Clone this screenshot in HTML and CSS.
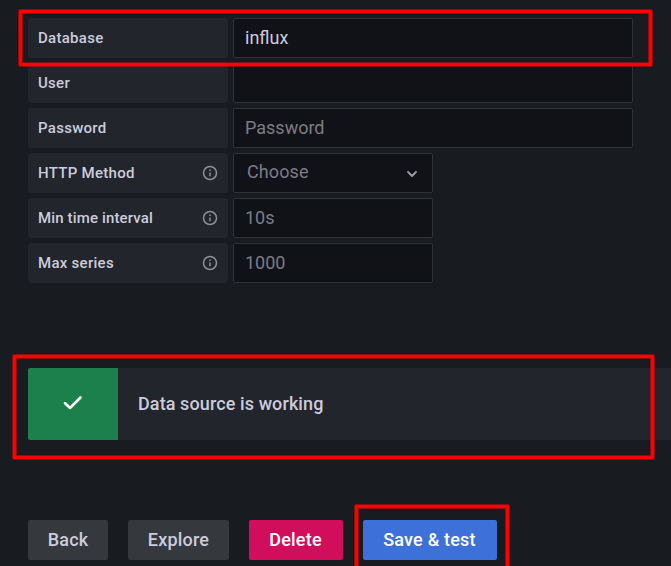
FILE: index.html
```html
<!DOCTYPE html>
<html lang="en">
<head>
<meta charset="utf-8">
<title>Data source settings</title>
<link rel="stylesheet" href="styles.css">
</head>
<body>
<main class="page">
  <form class="settings">
    <div class="row"><label class="label">Database</label><div class="field wide value">influx</div></div>
    <div class="row"><label class="label">User</label><div class="field wide"></div></div>
    <div class="row"><label class="label">Password</label><div class="field wide">Password</div></div>
    <div class="row"><label class="label"><span class="http">HTTP Method</span><svg class="info" viewBox="0 0 16 16"><circle cx="8" cy="8" r="6.5"/><path d="M8 7.4v3.8M8 4.6v1.4"/></svg></label><div class="field select"><span>Choose</span><svg class="chevron" viewBox="0 0 12 12"><path d="M2 4l4 4 4-4"/></svg></div></div>
    <div class="row"><label class="label"><span class="interval">Min time interval</span><svg class="info" viewBox="0 0 16 16"><circle cx="8" cy="8" r="6.5"/><path d="M8 7.4v3.8M8 4.6v1.4"/></svg></label><div class="field">10s</div></div>
    <div class="row"><label class="label rounded"><span class="series">Max series</span><svg class="info" viewBox="0 0 16 16"><circle cx="8" cy="8" r="6.5"/><path d="M8 7.4v3.8M8 4.6v1.4"/></svg></label><div class="field">1000</div></div>
  </form>
  <section class="alert">
    <div class="status"><svg class="check" viewBox="0 0 20 16"><path d="M2 8.2l5 4.8L17.5 2.5"/></svg></div>
    <div class="message">Data source is working</div>
  </section>
  <div class="actions">
    <button class="button back">Back</button>
    <button class="button explore">Explore</button>
    <button class="button delete">Delete</button>
    <button class="button save">Save &amp; test</button>
  </div>
  <div class="mark mark-database"></div>
  <div class="mark mark-alert"></div>
  <div class="mark mark-save"></div>
</main>
</body>
</html>
```
FILE: styles.css
```css
* { box-sizing: border-box; }
body { margin: 0; background: #181b1f; color: #ccccdc; font-family: Roboto, "Liberation Sans", sans-serif; }
.page { position: relative; height: 566px; padding: 18px 0 0 28px; overflow: hidden; }
.settings { display: flex; flex-direction: column; gap: 5px; }
.row { display: flex; gap: 5px; height: 40px; }
.label { display: flex; align-items: center; justify-content: space-between; width: 200px; padding: 0 10px; border-radius: 2px; background: #22252b; font-size: 15px; font-weight: 500; letter-spacing: .28px; }
.interval { letter-spacing: .14px; }
.rounded { border-radius: 4px; }
.field { display: flex; align-items: center; width: 200px; padding: 0 11px 2px; border: 1px solid #303236; border-radius: 2px; background: #111217; color: #7b7c86; font-size: 18px; letter-spacing: 0; }
.wide { width: 400px; }
.value { color: #ccccdc; }
.select { justify-content: space-between; padding: 0 14px 4px 13px; letter-spacing: .1px; }
.info { width: 16px; height: 16px; margin-top: -1px; fill: none; stroke: #8e8e99; stroke-width: 1.5; }
.chevron { width: 12px; height: 12px; margin-top: 5px; fill: none; stroke: #9c9ca7; stroke-width: 1.8; stroke-linecap: round; stroke-linejoin: round; }
.alert { display: flex; height: 72px; margin-top: 85px; border-radius: 2px 0 0 2px; background: #22252b; overflow: hidden; }
.status { display: flex; align-items: center; justify-content: center; width: 90px; background: #1b804b; }
.check { width: 20px; height: 16px; margin-bottom: 2px; fill: none; stroke: #fff; stroke-width: 2.6; stroke-linecap: round; stroke-linejoin: round; }
.message { display: flex; align-items: center; padding: 0 0 2px 20px; font-size: 18px; font-weight: 500; letter-spacing: .1px; }
.actions { display: flex; gap: 20px; margin-top: 80px; }
.button { height: 40px; padding: 0 0 2px; border: 0; border-radius: 2px; color: #fff; font: 500 18px Roboto, "Liberation Sans", sans-serif; letter-spacing: .2px; }
.back, .explore { background: #35383d; color: #ccccdc; }
.back { width: 80px; }
.explore { width: 101px; }
.delete { width: 94px; padding-right: 1px; background: #d10e5c; }
.save { width: 134px; padding-right: 1px; background: #3d71d9; }
.mark { position: absolute; border: 3px solid #f00; border-radius: 1px; box-shadow: 0 0 0 1px rgba(255, 0, 0, .5), inset 0 0 0 1px rgba(255, 0, 0, .5); pointer-events: none; }
.mark-database { left: 19px; top: 10px; width: 633px; height: 56px; }
.mark-alert { left: 13px; top: 355px; width: 641px; height: 104px; }
.mark-save { left: 355px; top: 505px; width: 154px; height: 80px; }
```
